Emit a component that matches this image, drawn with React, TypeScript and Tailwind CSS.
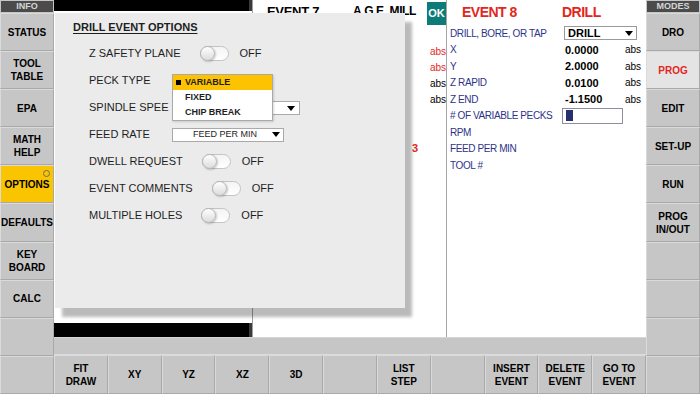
import React from 'react';

type Btn = { lines: string[]; tone?: 'yellow' | 'light'; dot?: boolean };

const leftButtons: Btn[] = [
  { lines: ['STATUS'] },
  { lines: ['TOOL', 'TABLE'] },
  { lines: ['EPA'] },
  { lines: ['MATH', 'HELP'] },
  { lines: ['OPTIONS'], tone: 'yellow', dot: true },
  { lines: ['DEFAULTS'] },
  { lines: ['KEY', 'BOARD'] },
  { lines: ['CALC'] },
  { lines: [] },
  { lines: [] },
];

const rightButtons: Btn[] = [
  { lines: ['DRO'] },
  { lines: ['PROG'], tone: 'light' },
  { lines: ['EDIT'] },
  { lines: ['SET-UP'] },
  { lines: ['RUN'] },
  { lines: ['PROG', 'IN/OUT'] },
  { lines: [] },
  { lines: [] },
  { lines: [] },
  { lines: [] },
];

const bottomButtons: string[][] = [
  ['FIT', 'DRAW'],
  ['XY'],
  ['YZ'],
  ['XZ'],
  ['3D'],
  [],
  ['LIST', 'STEP'],
  [],
  ['INSERT', 'EVENT'],
  ['DELETE', 'EVENT'],
  ['GO TO', 'EVENT'],
];

function SideButton({ b }: { b: Btn }) {
  const bg =
    b.tone === 'yellow' ? 'bg-[#fbc400]' : b.tone === 'light' ? 'bg-[#e4e4e4]' : 'bg-[#c6c6c6]';
  const color = b.tone === 'light' ? 'text-[#e3261d]' : 'text-black';
  return (
    <div
      className={`relative flex-1 flex flex-col items-center justify-center border border-t-[#dadada] border-l-[#dadada] border-r-[#a9a9a9] border-b-[#a9a9a9] ${bg} ${color} text-[10px] font-bold leading-[13px]`}
    >
      {b.lines.map((l) => (
        <span key={l}>{l}</span>
      ))}
      {b.dot && (
        <span className="absolute right-[3px] top-[4px] w-[7px] h-[7px] rounded-full border border-[#6b6b6b]" />
      )}
    </div>
  );
}

function Sidebar({ title, items }: { title: string; items: Btn[] }) {
  return (
    <div className="w-[54px] h-[394px] flex flex-col bg-[#c6c6c6]">
      <div className="h-[13px] p-[1px]">
        <div className="h-full bg-[#4b4b4b] text-[#d6d6d6] text-[9px] font-bold leading-[11px] text-center">
          {title}
        </div>
      </div>
      {items.map((b, i) => (
        <SideButton key={i} b={b} />
      ))}
    </div>
  );
}

function Toggle() {
  return (
    <div className="relative w-[29px] h-[15px] rounded-full border border-[#c4c4c4] bg-gradient-to-b from-[#f4f4f4] to-white">
      <div className="absolute left-[-1px] top-[-1px] w-[15px] h-[15px] rounded-full border border-[#b5b5b5] bg-gradient-to-b from-white to-[#dcdcdc] shadow-[1px_1px_2px_rgba(0,0,0,0.2)]" />
    </div>
  );
}

function ToggleRow({ label }: { label: string }) {
  return (
    <div className="h-[27px] flex items-center">
      <span>{label}</span>
      <span className="ml-[19px]">
        <Toggle />
      </span>
      <span className="ml-[11px]">OFF</span>
    </div>
  );
}

function Caret() {
  return <span className="inline-block w-0 h-0 border-l-[4px] border-r-[4px] border-t-[5px] border-l-transparent border-r-transparent border-t-black" />;
}

function Modal() {
  return (
    <div className="absolute left-[55px] top-[13px] w-[350px] h-[295px] bg-[#ebebeb] shadow-[7px_9px_3px_rgba(0,0,0,0.27)] text-[#1e1e1e] text-[11px] leading-[13px]">
      <div className="pt-[8px] pl-[18px] h-[27px]">
        <span className="font-bold underline underline-offset-[2px]">DRILL EVENT OPTIONS</span>
      </div>
      <div className="pl-[34px]">
        <ToggleRow label="Z SAFETY PLANE" />
        <div className="relative z-20 h-[27px] flex items-center">
          <span className="w-[83px]">PECK TYPE</span>
          <div className="absolute left-[83px] top-[7px] w-[101px] h-[47px] bg-white border border-[#a9a9a9] text-[9px] font-bold leading-[15px] shadow-[1px_1px_2px_rgba(0,0,0,0.15)]">
            <div className="h-[15px] bg-[#fdc300] flex items-center pl-[3px]">
              <span className="w-[5px] h-[5px] bg-black mr-[4px]" />
              VARIABLE
            </div>
            <div className="h-[15px] pl-[12px]">FIXED</div>
            <div className="h-[15px] pl-[12px]">CHIP BREAK</div>
          </div>
        </div>
        <div className="relative h-[27px] flex items-center">
          <span className="w-[83px] whitespace-nowrap">SPINDLE SPEE</span>
          <div className="absolute left-[83px] top-[7px] w-[128px] h-[14px] bg-white border border-[#a9a9a9] flex items-center justify-end pr-[4px]">
            <Caret />
          </div>
        </div>
        <div className="h-[27px] flex items-center">
          <span className="w-[83px]">FEED RATE</span>
          <div className="w-[112px] h-[14px] bg-white border border-[#a9a9a9] flex items-center text-[9px] leading-[11px] pl-[20px] pr-[3px]">
            <span className="flex-1">FEED PER MIN</span>
            <Caret />
          </div>
        </div>
        <ToggleRow label="DWELL REQUEST" />
        <ToggleRow label="EVENT COMMENTS" />
        <ToggleRow label="MULTIPLE HOLES" />
      </div>
    </div>
  );
}

const event8Rows: { label: string; value?: string }[] = [
  { label: 'X', value: '0.0000' },
  { label: 'Y', value: '2.0000' },
  { label: 'Z RAPID', value: '0.0100' },
  { label: 'Z END', value: '-1.1500' },
];

export default function App() {
  return (
    <div className="relative w-[700px] h-[394px] overflow-hidden flex bg-[#c6c6c6] font-['Liberation_Sans',Arial,sans-serif]">
      <Sidebar title="INFO" items={leftButtons} />

      <div className="w-[592px] flex flex-col">
        <div className="h-[337px] flex">
          {/* drawing area */}
          <div className="w-[199px] flex flex-col bg-white border-r border-[#9e9e9e]">
            <div className="h-[11px] bg-black border-r-[3px] border-[#3a3a3a]" />
            <div className="flex-1" />
            <div className="h-[14px] bg-black border-r-[3px] border-[#3a3a3a]" />
          </div>

          {/* event 7 */}
          <div className="relative w-[194px] bg-white border-r border-[#a5a5a5] text-[10px]">
            <div className="absolute left-[14px] top-[4px] text-[13px] font-bold leading-[15px] tracking-[-0.3px]">EVENT 7</div>
            <div className="absolute left-[100px] top-[4px] text-[12px] font-bold leading-[15px] tracking-[-0.4px]">A.G.E. MILL</div>
            <div className="absolute right-0 top-[2px] w-[19px] h-[23px] bg-[#0d7c78] text-white text-[11px] font-bold flex items-center justify-center">
              OK
            </div>
            <div className="absolute left-[177px] top-[46px] leading-[12px] text-[#e3261d]">abs</div>
            <div className="absolute left-[177px] top-[62px] leading-[12px] text-[#e3261d]">abs</div>
            <div className="absolute left-[177px] top-[78px] leading-[12px] text-black">abs</div>
            <div className="absolute left-[177px] top-[94px] leading-[12px] text-black">abs</div>
            <div className="absolute left-[159px] top-[142px] text-[11px] font-bold leading-[12px] text-[#e3261d]">3</div>
          </div>

          {/* event 8 */}
          <div className="flex-1 bg-white text-[10px] text-[#2c3489] tracking-[-0.4px]">
            <div className="h-[25px] flex items-center text-[14px] font-bold text-[#e3261d] tracking-[-0.5px]">
              <span className="ml-[15px] w-[100px]">EVENT 8</span>
              <span>DRILL</span>
            </div>
            <div className="h-[16.5px] flex items-center pl-[3px]">
              <span className="w-[114px]">DRILL, BORE, OR TAP</span>
              <div className="w-[73px] h-[14px] border border-[#9a9a9a] flex items-center pl-[3px] pr-[3px] text-black text-[11px] font-bold tracking-normal">
                <span className="flex-1">DRILL</span>
                <Caret />
              </div>
            </div>
            {event8Rows.map((r) => (
              <div key={r.label} className="h-[16.5px] flex items-center pl-[3px]">
                <span className="w-[115px]">{r.label}</span>
                <span className="w-[60px] text-black text-[11px] font-bold tracking-normal">{r.value}</span>
                <span className="text-black tracking-normal">abs</span>
              </div>
            ))}
            <div className="h-[16.5px] flex items-center pl-[3px]">
              <span className="w-[112px]">#&nbsp;OF VARIABLE PECKS</span>
              <div className="w-[61px] h-[16px] border border-[#8e8e9e] flex items-center pl-[3px]">
                <span className="w-[7px] h-[11px] bg-[#27306f]" />
              </div>
            </div>
            <div className="h-[16.5px] flex items-center pl-[3px]">RPM</div>
            <div className="h-[16.5px] flex items-center pl-[3px]">FEED PER MIN</div>
            <div className="h-[16.5px] flex items-center pl-[3px]">TOOL #</div>
          </div>
        </div>

        <div className="h-[18px] bg-[#c6c6c6] border-t border-[#d6d6d6] border-b border-b-[#dcdcdc]" />

        <div className="flex-1 grid grid-cols-11">
          {bottomButtons.map((lines, i) => (
            <div
              key={i}
              className="flex flex-col items-center justify-center bg-[#c6c6c6] border border-t-[#dadada] border-l-[#dadada] border-r-[#a9a9a9] border-b-[#a9a9a9] text-[10px] font-bold leading-[13px] text-black"
            >
              {lines.map((l) => (
                <span key={l}>{l}</span>
              ))}
            </div>
          ))}
        </div>
      </div>

      <Sidebar title="MODES" items={rightButtons} />

      <Modal />
    </div>
  );
}
